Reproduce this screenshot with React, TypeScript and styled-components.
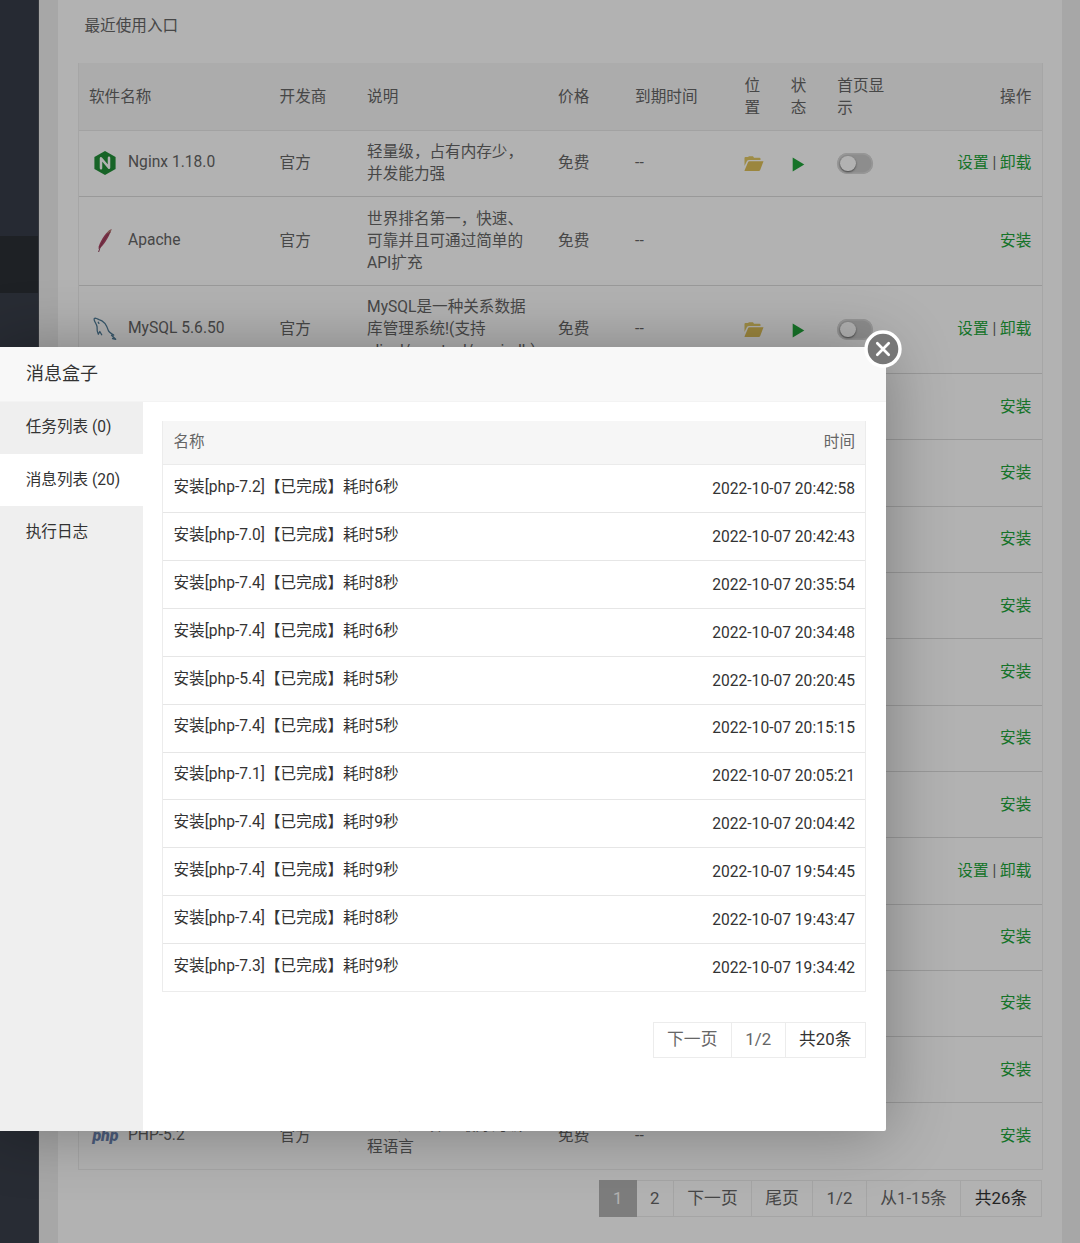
import React from "react";
import styled, { createGlobalStyle } from "styled-components";

const Global = createGlobalStyle`
  *, *::before, *::after { box-sizing: border-box; }
  body {
    margin: 0;
    font-family: Roboto, "Noto Sans CJK SC", sans-serif;
    font-size: 15.6px;
    line-height: 22.15px;
    color: #666;
  }
`;

const Page = styled.div`
  position: relative;
  width: 1080px;
  height: 1243px;
  overflow: hidden;
  display: flex;
  background: #f0f0f0;
`;

const Sidebar = styled.aside`
  width: 39px;
  flex: none;
  display: flex;
  flex-direction: column;
  background: #3a404b;
  border-right: 1px solid #4b5058;
`;
const SideGap = styled.div`
  height: 236px;
  background: #373d49;
`;
const SideActive = styled.div`
  height: 57px;
  background: #2c3035;
`;

const Panel = styled.main`
  width: 1004px;
  margin-left: 19px;
  padding: 0 20px;
  background: #fff;
`;
const Recent = styled.div`
  height: 63px;
  padding: 15px 6.5px 0;
`;

const SoftTable = styled.div`
  width: 965px;
  border: 1px solid #eee;
  border-top: 0;
`;
const SoftRow = styled.div<{ $h: number; $head?: boolean }>`
  display: grid;
  grid-template-columns: 190.6px 87.5px 191px 77px 109.5px 46.2px 46.5px 74px 1fr;
  align-items: center;
  height: ${(p) => p.$h}px;
  padding-top: ${(p) => (p.$head ? 1.4 : 0)}px;
  background: ${(p) => (p.$head ? "#f6f6f6" : "#fff")};
  border-bottom: 1px solid ${(p) => (p.$head ? "#e9e9e9" : "#dcdcdc")};
  &:last-child { border-bottom: 0; }
`;
const Cell = styled.div<{ $right?: boolean }>`
  padding: 0 ${(p) => (p.$right ? 10.7 : 10)}px 0 10px;
  text-align: ${(p) => (p.$right ? "right" : "left")};
  white-space: nowrap;
`;
const NameCell = styled(Cell)`
  display: flex;
  align-items: center;
  gap: 8px;
  padding-bottom: 2px;
`;
const IconBox = styled.span`
  display: flex;
  width: 31px;
  height: 26px;
  align-items: center;
  justify-content: center;
  & > svg { transform: translateY(1px); }
`;
const Green = styled.a`
  color: #20a53a;
`;
const Switch = styled.span`
  display: flex;
  width: 36px;
  height: 21px;
  padding: 3px;
  border-radius: 11px;
  background: #cacaca;
  box-shadow: inset 0 0 0 1.5px #d8d8d8;
`;
const Knob = styled.span`
  width: 15.5px;
  height: 15.5px;
  border-radius: 50%;
  background: #fff;
  box-shadow: 0 1px 2px rgba(0, 0, 0, 0.5);
`;
const PhpMark = styled.span`
  padding: 2px 0 0 2px;
  font: italic 900 16px/20px Roboto, sans-serif;
  color: #6d86b4;
`;

const Pager = styled.div<{ $top: number; $h: number; $lift?: number }>`
  display: flex;
  justify-content: flex-end;
  height: ${(p) => p.$h}px;
  margin-top: ${(p) => p.$top}px;
  font-size: 16.8px;
  & > span { padding-bottom: ${(p) => p.$lift ?? 1}px; }
`;
const PageItem = styled.span<{ $w: number; $on?: boolean; $strong?: boolean }>`
  display: flex;
  align-items: center;
  justify-content: center;
  width: ${(p) => p.$w}px;
  border: 1px solid #ececec;
  border-left-width: ${(p) => (p.$on ? 1 : 0)}px;
  &:first-child { border-left-width: 1px; }
  ${(p) => p.$on && "background: #b4b4b4; border-color: #b4b4b4;"}
  color: ${(p) => (p.$on ? "#fff" : p.$strong ? "#333" : "#666")};
`;

const Shade = styled.div`
  position: absolute;
  inset: 0;
  background: rgba(0, 0, 0, 0.3);
`;

const Dialog = styled.section`
  position: absolute;
  left: -8px;
  top: 347px;
  width: 894px;
  height: 784.4px;
  display: flex;
  flex-direction: column;
  background: #fff;
  border-radius: 2px;
  box-shadow: 1px 1px 65px rgba(0, 0, 0, 0.3);
  color: #333;
`;
const DialogTitle = styled.header`
  height: 54.5px;
  padding: 15px 34px 0;
  font-size: 18px;
  line-height: 24px;
  background: #f8f8f8;
  border-bottom: 1px solid #f3f3f3;
`;
const DialogBody = styled.div`
  flex: 1;
  display: flex;
`;
const Tabs = styled.nav`
  width: 151px;
  background: #efefef;
`;
const Tab = styled.div<{ $on?: boolean }>`
  height: 52.2px;
  padding: ${(p) => (p.$on ? 15 : 14.4)}px 0 0 33.7px;
  background: ${(p) => (p.$on ? "#fff" : "transparent")};
  &:last-child { padding-top: 15px; }
`;
const DialogContent = styled.div`
  flex: 1;
  padding: 19px 20px 0 19px;
`;
const Messages = styled.div`
  border: 1px solid #ececec;
  border-top: 0;
`;
const MsgHead = styled.div`
  display: flex;
  justify-content: space-between;
  height: 44.9px;
  padding: 10.8px 10px 0 10.5px;
  background: #f6f6f6;
  border-bottom: 1px solid #ebebeb;
  color: #666;
`;
const MsgRow = styled.div`
  display: flex;
  justify-content: space-between;
  height: 47.87px;
  padding: 10.7px 10px 0 10.5px;
  border-bottom: 1px solid #e6e6e6;
  &:last-child { border-bottom: 0; height: 46.9px; }
`;
const MsgTime = styled.time`
  padding-top: 2px;
`;
const Close = styled.button`
  position: absolute;
  right: -16px;
  top: -17px;
  width: 38px;
  height: 38px;
  padding: 0;
  border: 0;
  background: none;
`;

const NginxIcon = () => (
  <svg width="22" height="24" viewBox="0 0 22 24">
    <path d="M11 0 21.6 6v12L11 24 .4 18V6z" fill="#229038" />
    <path d="M7 17.2V7.2l8 9.6V6.8" fill="none" stroke="#fff" strokeWidth="2.5" strokeLinejoin="round" strokeLinecap="round" />
  </svg>
);
const ApacheIcon = () => (
  <svg width="16" height="25" viewBox="0 0 16 25">
    <path d="M14.6 1.2C10 3 4 11 1.7 18.5L1.5 21c5-3 10-11 13.1-19.8z" fill="#ae4564" />
    <path d="M14.6 1.2c-2 .4-4 2.4-5 3.8l3.2 1.1z" fill="#b98178" />
    <path d="M13 4C8 10 3.5 16 1.6 24" fill="none" stroke="#8f3d59" strokeWidth="1" />
  </svg>
);
const MysqlIcon = () => (
  <svg width="24" height="24" viewBox="0 0 24 24" fill="none" stroke="#527f9b" strokeWidth="1.3" strokeLinecap="round" strokeLinejoin="round">
    <path d="M8.7 17.8 6.8 14.5 5.3 17.2C3.7 14.8 4 12 4.1 9.8 3.8 7.5 1.6 5 1.2 2.9.7 1.2 2 1 3.6 1.5L6 2.7c5.5 1.2 8 6.5 9.5 11.2 1 2.1 3.2 2.7 5.2 4.2l-2.2.2 4.2 4-3.2-.8" />
    <path d="M5.2 5.2l.7 1.2" />
  </svg>
);
const FolderIcon = () => (
  <svg width="20" height="16" viewBox="0 0 20 16" style={{ display: "block" }}>
    <path d="M.5 10V2q0-1 1-1H4l1-.8h4l1 1.6h5.5q1 0 1 1V4H5Q3.5 4 3 5z" fill="#e2c965" />
    <path d="M.5 14.5 4 6.3q.4-1 1.5-1h14L16.2 14q-.4 1-1.5 1H1.2q-.8 0-.7-.5z" fill="#dfc15a" />
  </svg>
);
const PlayIcon = () => (
  <svg width="13" height="15" viewBox="0 0 13 15" style={{ display: "block" }}>
    <path d="M.7.5 12.3 7.5.7 14.5z" fill="#20a53a" />
  </svg>
);

const Media = styled(Cell)<{ $x?: number }>`
  padding-top: 1.5px;
  padding-left: ${(p) => p.$x ?? 10.5}px;
  padding-right: 0;
`;

type Soft = {
  icon?: React.ReactNode;
  name?: string;
  desc?: string[];
  installed?: boolean;
  height: number;
};

const softs: Soft[] = [
  { icon: <NginxIcon />, name: "Nginx 1.18.0", desc: ["轻量级，占有内存少，", "并发能力强"], installed: true, height: 66.3 },
  { icon: <ApacheIcon />, name: "Apache", desc: ["世界排名第一，快速、", "可靠并且可通过简单的", "API扩充"], height: 88.6 },
  { icon: <MysqlIcon />, name: "MySQL 5.6.50", desc: ["MySQL是一种关系数据", "库管理系统!(支持", "alisql/greatsql/mariadb)"], installed: true, height: 88.6 },
  ...Array.from({ length: 11 }, (_, i) => ({ installed: i === 7, height: 66.3 })),
  { icon: <PhpMark>php</PhpMark>, name: "PHP-5.2", desc: ["PHP是世界上最好的编", "程语言"], height: 66 },
];

const messages: [string, number, string][] = [
  ["7.2", 6, "20:42:58"],
  ["7.0", 5, "20:42:43"],
  ["7.4", 8, "20:35:54"],
  ["7.4", 6, "20:34:48"],
  ["5.4", 5, "20:20:45"],
  ["7.4", 5, "20:15:15"],
  ["7.1", 8, "20:05:21"],
  ["7.4", 9, "20:04:42"],
  ["7.4", 9, "19:54:45"],
  ["7.4", 8, "19:43:47"],
  ["7.3", 9, "19:34:42"],
];

function SoftwareRow({ soft }: { soft: Soft }) {
  const live = soft.installed && soft.name;
  return (
    <SoftRow $h={soft.height}>
      <NameCell>
        {soft.name && <><IconBox>{soft.icon}</IconBox>{soft.name}</>}
      </NameCell>
      <Cell>{soft.name && "官方"}</Cell>
      <Cell>{soft.desc?.map((line) => <div key={line}>{line}</div>)}</Cell>
      <Cell>{soft.name && "免费"}</Cell>
      <Cell>{soft.name && "--"}</Cell>
      <Media $x={9.7}>{live && <FolderIcon />}</Media>
      <Media $x={11.5}>{live && <PlayIcon />}</Media>
      <Cell>{live && <Switch><Knob /></Switch>}</Cell>
      <Cell $right>
        {soft.installed ? <><Green>设置</Green> | <Green>卸载</Green></> : <Green>安装</Green>}
      </Cell>
    </SoftRow>
  );
}

export default function App() {
  return (
    <>
      <Global />
      <Page>
        <Sidebar><SideGap /><SideActive /></Sidebar>
        <Panel>
          <Recent>最近使用入口</Recent>
          <SoftTable>
            <SoftRow $h={67.7} $head>
              <Cell>软件名称</Cell>
              <Cell>开发商</Cell>
              <Cell>说明</Cell>
              <Cell>价格</Cell>
              <Cell>到期时间</Cell>
              <Cell>位<br />置</Cell>
              <Cell>状<br />态</Cell>
              <Cell>首页显<br />示</Cell>
              <Cell $right>操作</Cell>
            </SoftRow>
            {softs.map((soft, i) => <SoftwareRow key={i} soft={soft} />)}
          </SoftTable>
          <Pager $top={9.5} $h={37}>
            <PageItem $w={37.5} $on>1</PageItem>
            <PageItem $w={37.5}>2</PageItem>
            <PageItem $w={78}>下一页</PageItem>
            <PageItem $w={61}>尾页</PageItem>
            <PageItem $w={54}>1/2</PageItem>
            <PageItem $w={94}>从1-15条</PageItem>
            <PageItem $w={81} $strong>共26条</PageItem>
          </Pager>
        </Panel>
        <Shade />
        <Dialog>
          <DialogTitle>消息盒子</DialogTitle>
          <DialogBody>
            <Tabs>
              <Tab>任务列表 (0)</Tab>
              <Tab $on>消息列表 (20)</Tab>
              <Tab>执行日志</Tab>
            </Tabs>
            <DialogContent>
              <Messages>
                <MsgHead><span>名称</span><span>时间</span></MsgHead>
                {messages.map(([version, seconds, time]) => (
                  <MsgRow key={time}>
                    <span>{`安装[php-${version}]【已完成】耗时${seconds}秒`}</span>
                    <MsgTime>{`2022-10-07 ${time}`}</MsgTime>
                  </MsgRow>
                ))}
              </Messages>
              <Pager $top={30} $h={36.5} $lift={2.5}>
                <PageItem $w={79.5}>下一页</PageItem>
                <PageItem $w={53.5}>1/2</PageItem>
                <PageItem $w={80.5} $strong>共20条</PageItem>
              </Pager>
            </DialogContent>
          </DialogBody>
          <Close aria-label="关闭">
            <svg width="38" height="38" viewBox="0 0 38 38">
              <circle cx="19" cy="19" r="17" fill="#777" stroke="#fff" strokeWidth="3.4" />
              <path d="m13.3 13.3 11.4 11.4m0-11.4L13.3 24.7" stroke="#fff" strokeWidth="2.7" strokeLinecap="round" />
            </svg>
          </Close>
        </Dialog>
      </Page>
    </>
  );
}
